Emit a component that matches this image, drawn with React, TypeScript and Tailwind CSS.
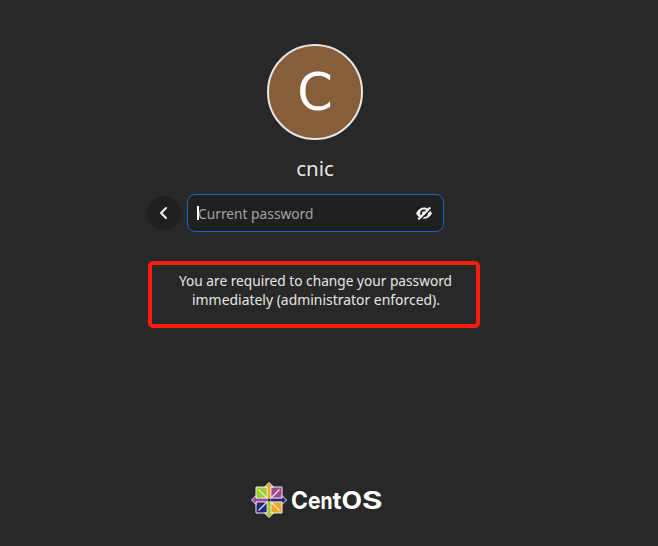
import React from "react";

function CentosMark() {
  return (
    <svg width="38" height="38" viewBox="-19 -19 38 38" className="block" aria-hidden="true">
      <g stroke="#efeaf0" strokeWidth="1" strokeLinejoin="miter">
        <path d="M-13-13H0V0H-13Z" fill="#9ccd2a" />
        <path d="M0-13H13V0H0Z" fill="#9b4a8c" />
        <path d="M-13 0H0V13H-13Z" fill="#262577" />
        <path d="M0 0H13V13H0Z" fill="#efa724" />
        <path d="M0-17.5L4.5-13H1.9V-2L0 0L-1.9-2V-13H-4.5Z" fill="#efa724" />
        <path d="M17.5 0L13 4.5V1.9H2L0 0L2-1.9H13V-4.5Z" fill="#262577" />
        <path d="M0 17.5L-4.5 13H-1.9V2L0 0L1.9 2V13H4.5Z" fill="#9ccd2a" />
        <path d="M-17.5 0L-13-4.5V-1.9H-2L0 0L-2 1.9H-13V4.5Z" fill="#9b4a8c" />
      </g>
      <path d="M-10.5-10.5L-2-2M10.5-10.5L2-2M-10.5 10.5L-2 2M10.5 10.5L2 2" stroke="#efeaf0" strokeWidth="1.2" />
      <rect x="-1.7" y="-1.7" width="3.4" height="3.4" fill="#20202c" stroke="#efeaf0" strokeWidth=".5" />
    </svg>
  );
}

export default function App() {
  return (
    <main className="flex h-[546px] w-[658px] flex-col overflow-hidden bg-[#282828] pt-11 font-['Noto_Sans',sans-serif] text-[#e6e6e4]">
      <div className="flex w-[630px] flex-col items-center">
        <div className="flex size-24 items-center justify-center rounded-full border-2 border-[#e8e6e3] bg-[#865e3c]">
          <span className="font-['DejaVu_Sans',sans-serif] text-[51px] leading-none text-white">C</span>
        </div>
        <h1 className="mt-[14px] mb-px text-[20.5px] leading-7">cnic</h1>
      </div>
      <div className="mt-[11px] ml-[147px] flex items-center gap-1.5">
        <button aria-label="Back" className="flex size-[34px] items-center justify-center rounded-full bg-[#202020]">
          <svg width="16" height="16" viewBox="0 0 16 16" fill="none" stroke="#f0f0ee" strokeWidth="2.1" strokeLinecap="round" strokeLinejoin="round">
            <path d="M10 3L5 8L10 13" />
          </svg>
        </button>
        <div className="flex h-[38px] w-[257px] items-center rounded-lg border-[1.5px] border-[#1b66c9] bg-[#202020] pr-[10px] pl-[9px]">
          <span className="h-[14px] w-[1.5px] bg-white" />
          <span className="-ml-px flex-1 text-[#a3a3a1]">
            <svg width="130" height="24" className="block overflow-visible">
              <text x="0" y="18" fontSize="14.5" fill="currentColor" textLength="115.5" lengthAdjust="spacingAndGlyphs">Current password</text>
            </svg>
          </span>
          <svg width="18" height="16" viewBox="0 0 18 16" fill="none">
            <path d="M1 8.5C3 4.4 6 2.6 9 2.6S15 4.4 17 8.5C15 12.2 12 13.7 9 13.7S3 12.2 1 8.5Z" fill="#f0f0ee" />
            <circle cx="9" cy="8.2" r="3.8" fill="#202020" />
            <circle cx="9" cy="8.2" r="2" fill="#f0f0ee" />
            <path d="M5.2 15L16.7 3.5" stroke="#202020" strokeWidth="1.6" />
            <path d="M3.3 14.4L15.2 2.5" stroke="#f0f0ee" strokeWidth="2.2" />
          </svg>
        </div>
      </div>
      <section className="mt-[29px] ml-[148px] h-[67px] w-[332px] rounded-[5px] border-4 border-[#ff1b0d] pt-[6px]">
        <svg width="324" height="42" className="block" fill="currentColor" fontSize="14.5">
          <text x="27" y="15" textLength="273" lengthAdjust="spacingAndGlyphs">You are required to change your password</text>
          <text x="40" y="34" textLength="248" lengthAdjust="spacingAndGlyphs">immediately (administrator enforced).</text>
        </svg>
      </section>
      <footer className="mt-[153px] ml-[250px] flex items-center">
        <CentosMark />
        <svg width="110" height="38" className="ml-[3px] block overflow-visible font-['Inter',sans-serif]" fontSize="24" fontWeight="700" fill="#fff">
          <text y="27.5">
            <tspan x="0" textLength="17" lengthAdjust="spacingAndGlyphs">C</tspan>
            <tspan x="17" textLength="12.5" lengthAdjust="spacingAndGlyphs">e</tspan>
            <tspan x="29.5" textLength="12" lengthAdjust="spacingAndGlyphs">n</tspan>
            <tspan x="41.5" textLength="9" lengthAdjust="spacingAndGlyphs">t</tspan>
            <tspan x="50.5" textLength="20.5" lengthAdjust="spacingAndGlyphs">O</tspan>
            <tspan x="71" textLength="20.5" lengthAdjust="spacingAndGlyphs">S</tspan>
          </text>
        </svg>
      </footer>
    </main>
  );
}
